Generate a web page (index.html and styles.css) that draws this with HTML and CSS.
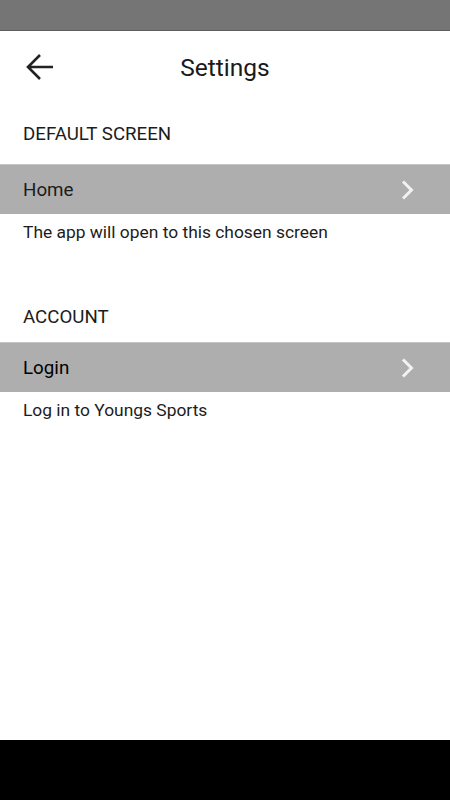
FILE: index.html
```html
<!DOCTYPE html>
<html lang="en">
<head>
    <meta charset="UTF-8">
    <meta name="viewport" content="width=device-width, initial-scale=1.0">
    <title>Settings</title>
    <link rel="stylesheet" href="styles.css">
</head>
<body>
    <div class="screen">
        <div class="status-bar"></div>
        <div class="header">
            <button class="back">
                <svg width="28" height="28" viewBox="0 0 28 28">
                    <path d="M27 14H2M14 2L2 14l12 12" fill="none" stroke="#222" stroke-width="2.6"/>
                </svg>
            </button>
            <h1>Settings</h1>
        </div>

        <div class="section">
            <div class="section-title">DEFAULT SCREEN</div>
            <div class="row">
                <span>Home</span>
                <svg class="chevron" width="16" height="20" viewBox="0 0 16 20">
                    <path d="M3 1.5l8.5 8.5L3 18.5" fill="none" stroke="#f2f2f2" stroke-width="3"/>
                </svg>
            </div>
            <div class="desc">The app will open to this chosen screen</div>
        </div>

        <div class="section">
            <div class="section-title">ACCOUNT</div>
            <div class="row">
                <span class="dark">Login</span>
                <svg class="chevron" width="16" height="20" viewBox="0 0 16 20">
                    <path d="M3 1.5l8.5 8.5L3 18.5" fill="none" stroke="#f2f2f2" stroke-width="3"/>
                </svg>
            </div>
            <div class="desc">Log in to Youngs Sports</div>
        </div>

        <div class="spacer"></div>
        <div class="nav-bar"></div>
    </div>
</body>
</html>
```

FILE: styles.css
```css
body {
    margin: 0;
    font-family: Roboto, "Noto Sans", sans-serif;
    color: #1c1c1c;
    background: #fff;
}
.screen {
    display: flex;
    flex-direction: column;
    height: 800px;
}
.status-bar {
    height: 30px;
    background-color: #757575;
    border-bottom: 1px solid #5e5e5e;
}
.header {
    position: relative;
    height: 73px;
    display: flex;
    align-items: center;
    justify-content: center;
}
.header h1 {
    margin: 0;
    font-size: 24.5px;
    font-weight: 400;
    color: #1a1a1a;
}
.back {
    position: absolute;
    left: 26px;
    top: 22px;
    padding: 0;
    border: none;
    background: none;
    display: flex;
}
.section-title {
    height: 60px;
    display: flex;
    align-items: center;
    padding-left: 23px;
    font-size: 18.7px;
}
.section + .section .section-title {
    height: 50px;
}
.row {
    height: 49px;
    background-color: #aeaeae;
    border-top: 1px solid #c4c4c4;
    display: flex;
    align-items: center;
    justify-content: space-between;
    padding: 0 34px 0 23px;
    font-size: 18.8px;
}
.row .dark {
    color: #000;
}
.chevron {
    display: block;
}
.desc {
    padding: 8px 23px 0;
    height: 70px;
    font-size: 17.4px;
    line-height: 20px;
}
.spacer {
    flex: 1;
}
.nav-bar {
    height: 60px;
    background: #000;
}
```
